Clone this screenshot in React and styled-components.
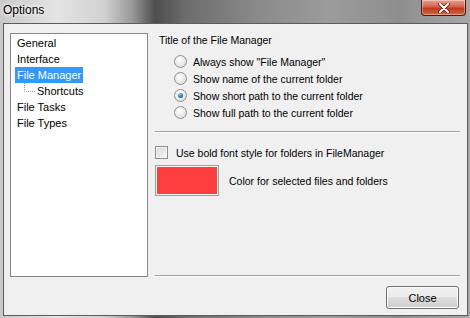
import styled, { createGlobalStyle } from "styled-components"

const Global = createGlobalStyle`
    html, body {
        margin: 0;
        padding: 0;
        background: #808080;
    }
    body {
        font-family: "Liberation Sans", Arial, sans-serif;
        font-size: 10.5px;
        color: #000;
    }
`

const Frame = styled.div`
    width: 470px;
    height: 318px;
    box-sizing: border-box;
    display: flex;
    flex-direction: column;
    background: linear-gradient(90deg, #c9c9c9 0%, #e4e4e4 12%, #d2d2d2 22%, #9a9a9a 28%, #4e4e4e 33%, #6e6e6e 40%, #8a8a8a 55%, #9c9c9c 70%, #8e8e8e 85%, #a8a8a8 100%);
`

const TitleBar = styled.div`
    height: 23px;
    display: flex;
    align-items: flex-start;
    justify-content: space-between;
    padding-left: 3px;
`

const Title = styled.span`
    font-size: 12px;
    line-height: 20px;
    color: #000;
    text-shadow: 0 0 6px #fff, 0 0 4px #fff;
`

const CloseX = styled.div`
    width: 43px;
    height: 15px;
    margin-right: 4px;
    border: 1px solid #4a1a12;
    border-top: none;
    border-radius: 0 0 4px 4px;
    background: linear-gradient(#e8a493 0%, #d3624a 45%, #c1371c 55%, #d5683f 100%);
    display: flex;
    align-items: center;
    justify-content: center;
    box-shadow: inset 0 0 0 1px rgba(255,255,255,0.35);
`

const Client = styled.div`
    flex: 1;
    margin: 0 2px 2px 3px;
    border: 1px solid #5c5c5c;
    background: #f0f0f0;
    display: flex;
    flex-direction: column;
    padding: 9px 7px 0 6px;
`

const Body = styled.div`
    display: flex;
    gap: 7px;
    height: 244px;
`

const Tree = styled.div`
    width: 138px;
    box-sizing: border-box;
    border: 1px solid #828790;
    background: #fff;
    padding: 1px 0 0 4px;
    display: flex;
    flex-direction: column;
`

const TreeItem = styled.div`
    height: 16px;
    display: flex;
    align-items: center;
    padding-left: ${p => (p.$child ? "9px" : "0")};
`

const Label = styled.span`
    padding: 0 2px;
    line-height: 16px;
    font-size: 11px;
    background: ${p => (p.$selected ? "#3399ff" : "transparent")};
    color: ${p => (p.$selected ? "#fff" : "#000")};
`

const Connector = styled.span`
    width: 10px;
    height: 8px;
    margin-top: -8px;
    border-left: 1px dotted #a0a0a0;
    border-bottom: 1px dotted #a0a0a0;
`

const Panel = styled.div`
    flex: 1;
    display: flex;
    flex-direction: column;
`

const GroupTitle = styled.div`
    line-height: 14px;
    padding: 0 0 0 4px;
`

const Options = styled.div`
    display: flex;
    flex-direction: column;
    padding: 6px 0 0 19px;
`

const OptionRow = styled.label`
    height: 17px;
    display: flex;
    align-items: center;
    gap: 6px;
`

const Radio = styled.span`
    width: 11px;
    height: 11px;
    border-radius: 50%;
    border: 1px solid #8f8f8f;
    background: radial-gradient(circle at 40% 35%, #fff 0%, #e6e6e6 60%, #cfcfcf 100%);
    display: flex;
    align-items: center;
    justify-content: center;
    &::after {
        content: "";
        display: ${p => (p.$checked ? "block" : "none")};
        width: 5px;
        height: 5px;
        border-radius: 50%;
        background: radial-gradient(circle at 40% 35%, #8ad6ff 0%, #1e6fb5 60%, #0c3f78 100%);
    }
`

const Separator = styled.div`
    height: 1px;
    margin-top: ${p => p.$gap || "0"};
    background: #a0a0a0;
    border-bottom: 1px solid #fff;
`

const CheckRow = styled.label`
    display: flex;
    align-items: center;
    gap: 8px;
    margin-top: 13px;
`

const Check = styled.span`
    width: 11px;
    height: 11px;
    border: 1px solid #8f8f8f;
    background: linear-gradient(135deg, #d8d8d8, #f6f6f6);
    box-shadow: inset 0 0 0 1px #f4f4f4;
`

const ColorRow = styled.div`
    display: flex;
    align-items: center;
    gap: 10px;
    margin-top: 6px;
`

const Swatch = styled.div`
    width: 64px;
    height: 31px;
    box-sizing: border-box;
    border: 1px solid #a0a0a0;
    box-shadow: inset 0 0 0 1px #fff;
    background: ${p => p.$color};
`

const Spacer = styled.div`
    flex: 1;
`

const Footer = styled.div`
    display: flex;
    justify-content: flex-end;
    padding: 9px 1px 0 0;
`

const Button = styled.button`
    width: 73px;
    height: 23px;
    font-family: inherit;
    font-size: 11px;
    color: #000;
    border: 1px solid #707070;
    border-radius: 3px;
    background: linear-gradient(#f2f2f2 0%, #ebebeb 49%, #dddddd 50%, #cfcfcf 100%);
    box-shadow: inset 0 0 0 1px #fcfcfc;
    padding: 0;
`

const titleOptions = [
    'Always show "File Manager"',
    "Show name of the current folder",
    "Show short path to the current folder",
    "Show full path to the current folder",
]

const App = () => {
  return (
    <>
      <Global />
      <Frame>
        <TitleBar>
          <Title>Options</Title>
          <CloseX>
            <svg width="12" height="10" viewBox="0 0 12 10">
              <path d="M2 1 L10 9 M10 1 L2 9" stroke="#3a1a18" strokeWidth="3.4" strokeLinecap="round" />
              <path d="M2 1 L10 9 M10 1 L2 9" stroke="#fff" strokeWidth="2" strokeLinecap="round" />
            </svg>
          </CloseX>
        </TitleBar>
        <Client>
          <Body>
            <Tree>
              <TreeItem><Label>General</Label></TreeItem>
              <TreeItem><Label>Interface</Label></TreeItem>
              <TreeItem><Label $selected>File Manager</Label></TreeItem>
              <TreeItem $child><Connector /><Label>Shortcuts</Label></TreeItem>
              <TreeItem><Label>File Tasks</Label></TreeItem>
              <TreeItem><Label>File Types</Label></TreeItem>
            </Tree>
            <Panel>
              <GroupTitle>Title of the File Manager</GroupTitle>
              <Options>
                {titleOptions.map((t, i) => (
                  <OptionRow key={t}>
                    <Radio $checked={i === 2} />
                    {t}
                  </OptionRow>
                ))}
              </Options>
              <Separator $gap="10px" />
              <CheckRow>
                <Check />
                Use bold font style for folders in FileManager
              </CheckRow>
              <ColorRow>
                <Swatch $color="#ff3f3f" />
                Color for selected files and folders
              </ColorRow>
              <Spacer />
              <Separator />
            </Panel>
          </Body>
          <Footer>
            <Button>Close</Button>
          </Footer>
        </Client>
      </Frame>
    </>
  )
}

export default App
